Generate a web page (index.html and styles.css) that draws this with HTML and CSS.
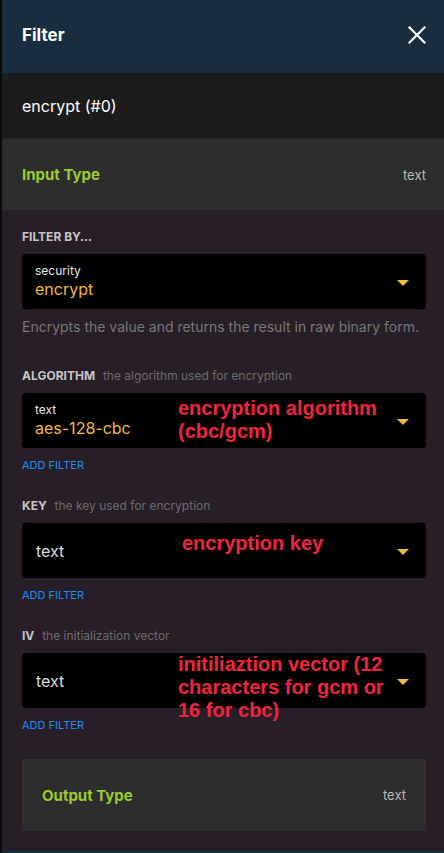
FILE: index.html
```html
<!DOCTYPE html>
<html>
<head>
<meta charset="utf-8">
<link rel="stylesheet" href="styles.css">
</head>
<body>
<div class="strip"></div>
<div class="panel">
  <header class="head">
    <h1 class="title">Filter</h1>
    <svg class="close" width="18" height="18" viewBox="0 0 18 18"><path d="M1.5 1.5L16.5 16.5M16.5 1.5L1.5 16.5" stroke="#fff" stroke-width="2.2" stroke-linecap="square"/></svg>
  </header>
  <div class="name-row">encrypt (#0)</div>
  <div class="type-row">
    <span class="type-label">Input Type</span>
    <span class="type-val">text</span>
  </div>
  <div class="body">
    <div class="label">FILTER BY...</div>
    <div class="select">
      <div class="sel-text">
        <div class="sel-small">security</div>
        <div class="sel-val">encrypt</div>
      </div>
      <span class="caret"></span>
    </div>
    <p class="desc">Encrypts the value and returns the result in raw binary form.</p>

    <div class="label">ALGORITHM <span class="hint">the algorithm used for encryption</span></div>
    <div class="select">
      <div class="sel-text">
        <div class="sel-small">text</div>
        <div class="sel-val">aes-128-cbc</div>
      </div>
      <span class="caret"></span>
      <div class="note note-alg">encryption algorithm<br>(cbc/gcm)</div>
    </div>
    <div class="add">ADD FILTER</div>

    <div class="label">KEY <span class="hint">the key used for encryption</span></div>
    <div class="select">
      <div class="sel-text">
        <div class="sel-plain">text</div>
      </div>
      <span class="caret"></span>
      <div class="note note-key">encryption key</div>
    </div>
    <div class="add">ADD FILTER</div>

    <div class="label">IV <span class="hint">the initialization vector</span></div>
    <div class="select">
      <div class="sel-text">
        <div class="sel-plain">text</div>
      </div>
      <span class="caret"></span>
      <div class="note note-iv">initiliaztion vector (12<br>characters for gcm or<br>16 for cbc)</div>
    </div>
    <div class="add">ADD FILTER</div>

    <div class="out-row">
      <span class="type-label">Output Type</span>
      <span class="type-val">text</span>
    </div>
  </div>
  <div class="foot"></div>
</div>
</body>
</html>
```

FILE: styles.css
```css
html, body {
  margin: 0;
  padding: 0;
}
body {
  background: #0b0b0c;
  display: flex;
  width: 444px;
  height: 853px;
  overflow: hidden;
  font-family: Inter, "Liberation Sans", sans-serif;
  color: #fff;
}
.strip {
  width: 2px;
  flex: none;
  background: #0b0b0c;
}
.panel {
  flex: 1;
  display: flex;
  flex-direction: column;
  background: #281e28;
}
.head {
  height: 73px;
  flex: none;
  background: #182d3d;
  display: flex;
  align-items: center;
  justify-content: space-between;
  padding: 0 18px 3px 20px;
  box-sizing: border-box;
}
.title {
  margin: 0;
  font-size: 17px;
  font-weight: 700;
  color: #fff;
}
.close {
  display: block;
}
.name-row {
  height: 65px;
  flex: none;
  background: #1c1c1c;
  display: flex;
  align-items: center;
  padding-left: 20px;
  font-size: 16px;
  color: #fff;
}
.type-row {
  height: 72px;
  flex: none;
  background: #2d2d2d;
  border-top: 1px solid #262626;
  box-sizing: border-box;
  display: flex;
  align-items: center;
  justify-content: space-between;
  padding: 0 18px 0 20px;
}
.type-label {
  color: #9bcb2d;
  font-weight: 700;
  font-size: 15px;
}
.type-val {
  color: #b9b9b9;
  font-size: 13px;
}
.body {
  flex: 1;
  padding: 19px 18px 0 20px;
  display: flex;
  flex-direction: column;
}
.label {
  font-size: 12px;
  line-height: 16px;
  font-weight: 700;
  color: #c6c6c6;
  margin-bottom: 9px;
}
.hint {
  font-weight: 400;
  color: #6c6c6c;
  margin-left: 5px;
}
.select {
  position: relative;
  height: 55px;
  background: #000;
  border-radius: 4px;
  display: flex;
  align-items: center;
  justify-content: space-between;
  padding: 0 17px 0 13px;
  box-sizing: border-box;
}
.sel-text {
  display: flex;
  flex-direction: column;
}
.sel-small {
  font-size: 12px;
  line-height: 15px;
  color: #e6e6e6;
  margin-top: -2px;
}
.sel-val {
  font-size: 16px;
  line-height: 20px;
  color: #f1b73f;
  margin-top: 1px;
}
.sel-plain {
  font-size: 16px;
  line-height: 20px;
  color: #dcdcdc;
  padding-left: 1px;
}
.caret {
  width: 0;
  height: 0;
  border-left: 6px solid transparent;
  border-right: 6px solid transparent;
  border-top: 6px solid #f2b93b;
  margin-top: 2px;
}
.note {
  position: absolute;
  left: 156px;
  color: #f0253c;
  font-family: "Liberation Sans", Arial, sans-serif;
  font-weight: 700;
  font-size: 20px;
  line-height: 23px;
  white-space: nowrap;
}
.note-alg { top: 4px; }
.note-key { top: 9px; left: 160px; }
.note-iv { top: 0px; }
.desc {
  margin: 8px 0 31px;
  font-size: 14px;
  line-height: 20px;
  color: #787878;
}
.add {
  margin: 10px 0 26px;
  font-size: 11px;
  line-height: 14px;
  color: #1a8ff0;
}
.out-row {
  margin-top: 1px;
  height: 72px;
  background: #2d2d2d;
  display: flex;
  align-items: center;
  justify-content: space-between;
  padding: 0 20px 0 20px;
}
.foot {
  height: 2px;
  flex: none;
  background: #12303f;
  margin-top: auto;
}
```
